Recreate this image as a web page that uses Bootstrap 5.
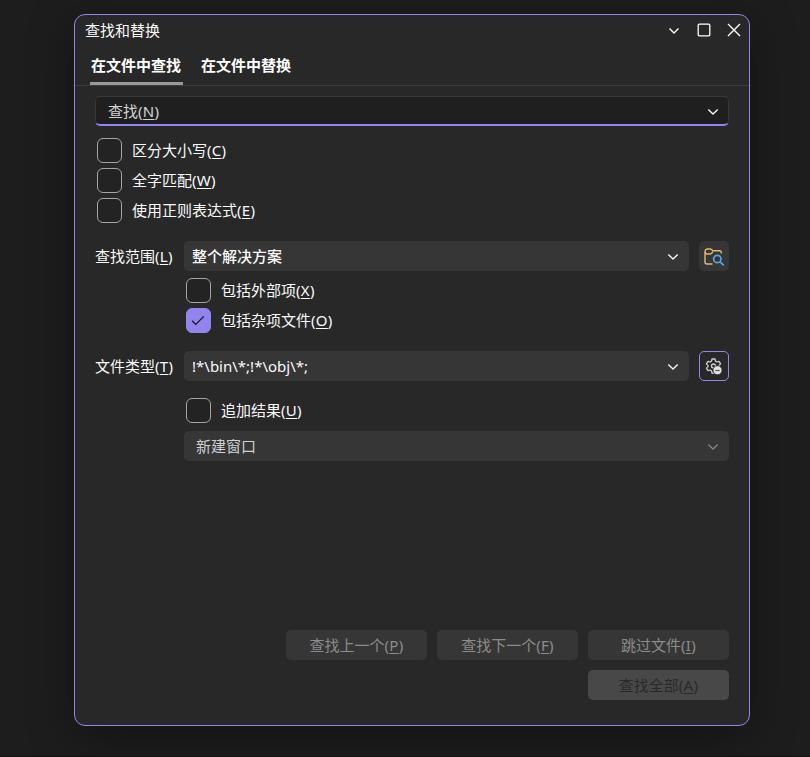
<!DOCTYPE html>
<html lang="zh-CN" data-bs-theme="dark">
<head>
<meta charset="utf-8">
<meta name="viewport" content="width=device-width, initial-scale=1">
<title>查找和替换</title>
<link href="https://cdn.jsdelivr.net/npm/bootstrap@5.3.0/dist/css/bootstrap.min.css" rel="stylesheet">
<style>
body{background:#1d1d1d;color:#fafafa;font:15px/20px "Noto Sans","Noto Sans CJK SC",sans-serif;height:757px;padding:14px 60px 0 74px;overflow:hidden;border-bottom:1px solid #150d0f}
.dialog-win{width:676px;height:712px;background:#282828;border:1px solid #9184ee;border-radius:11px;box-shadow:0 10px 46px rgba(0,0,0,.36)}
.title-bar{height:30px;padding-left:10px}
.win-btn{width:30px;height:30px;padding:0;border:0;background:none;color:#fff;display:flex;align-items:center;justify-content:center}
.tab-strip{height:41px;border-bottom:1px solid #3d3d3d;padding-left:15px;gap:17px}
.tab-item{height:40px;padding:10px 1px 0;font-weight:700;border-bottom:3px solid transparent;white-space:nowrap;color:#fff}
.tab-item.current{border-bottom-color:#999;width:93px}
.pane{padding:10px 20px 0;height:639px}
.find-box{height:30px;background:#1f1f1f;border:1px solid #383838;border-bottom:2px solid #9184ee;border-radius:5px;color:#d2d2d2;padding:1px 8px 0 12px}
.box{height:30px;background:#363636;border-radius:5px;padding:0 9px 0 8px}
.box svg,.find-box svg{flex:none}
.opt-row{height:30px;gap:10px;padding-left:2px}
.opt-row .form-check-input{width:25px;height:25px;margin:0;border:1px solid #a5a5a5;border-radius:6px;background-color:#232323;flex:none}
.opt-row .form-check-input:checked{background-color:#9184ee;border-color:#9184ee;background-size:25px 25px;background-image:url("data:image/svg+xml,%3csvg xmlns='http://www.w3.org/2000/svg' viewBox='0 0 25 25'%3e%3cpath fill='none' stroke='%23191919' stroke-width='1.3' d='M6 12.800l3.800 3.600 8-8'/%3e%3c/svg%3e")}
.hotkey{letter-spacing:.3px}
.field-label{width:89px;flex:none;white-space:nowrap}
.indent{margin-left:89px}
.match-group{margin-top:9px}
.scope-row{margin-top:16px}
.scope-opts{margin-top:4px}
.type-row{margin-top:16px}
.result-group{margin-top:14px}
.result-box{margin-top:6px;padding-left:12px;color:#cfcfcf}
.tool-btn{width:30px;height:30px;margin-left:10px;padding:0;background:#363636;border:0;border-radius:5px;display:flex;align-items:center;justify-content:center;flex:none}
.tool-btn.focused{background:#282828;border:1px solid #9184ee}
.act-stack{gap:10px;padding-bottom:25px}
.act-line{gap:10px}
.act-btn{width:141px;height:30px;padding:0;border:0;border-radius:5px;background:#363636;color:#8c8c8c;font-size:15px;line-height:30px}
.act-btn.primary-act{background:#484848;color:#292929}
u{text-underline-offset:2px;text-decoration-thickness:1px}
</style>
<script src="https://cdn.jsdelivr.net/npm/bootstrap@5.3.0/dist/js/bootstrap.bundle.min.js"></script>
</head>
<body>
<main class="dialog-win d-flex flex-column">
  <header class="title-bar d-flex align-items-center justify-content-between">
    <span>查找和替换</span>
    <div class="d-flex">
      <button class="win-btn" aria-label="menu"><svg width="12" height="12" viewBox="0 0 12 12" fill="none" stroke="currentColor" stroke-width="1.4"><path d="M1.5 4.5 6 9l4.5-4.5"/></svg></button>
      <button class="win-btn" aria-label="maximize"><svg width="14" height="14" viewBox="0 0 14 14" fill="none" stroke="currentColor" stroke-width="1.3"><rect x="1.2" y="1.2" width="11.6" height="11.6" rx="1"/></svg></button>
      <button class="win-btn" aria-label="close"><svg width="14" height="14" viewBox="0 0 14 14" fill="none" stroke="currentColor" stroke-width="1.4"><path d="m1 1 12 12M13 1 1 13"/></svg></button>
    </div>
  </header>
  <nav class="tab-strip d-flex">
    <div class="tab-item current">在文件中查找</div>
    <div class="tab-item">在文件中替换</div>
  </nav>
  <section class="pane d-flex flex-column">
    <div class="find-box d-flex align-items-center justify-content-between">
      <span>查找<span class="hotkey">(<u>N</u>)</span></span>
      <svg width="14" height="12" viewBox="0 0 14 12" fill="none" stroke="#f5f5f5" stroke-width="1.4"><path d="m2.300 4.500 4.700 4.500L11.700 4.500"/></svg>
    </div>
    <div class="match-group">
      <label class="opt-row d-flex align-items-center"><input class="form-check-input" type="checkbox"><span>区分大小写<span class="hotkey">(<u>C</u>)</span></span></label>
      <label class="opt-row d-flex align-items-center"><input class="form-check-input" type="checkbox"><span>全字匹配<span class="hotkey">(<u>W</u>)</span></span></label>
      <label class="opt-row d-flex align-items-center"><input class="form-check-input" type="checkbox"><span>使用正则表达式<span class="hotkey">(<u>E</u>)</span></span></label>
    </div>
    <div class="scope-row d-flex align-items-center">
      <span class="field-label">查找范围<span class="hotkey">(<u>L</u>)</span></span>
      <div class="box flex-grow-1 d-flex align-items-center justify-content-between"><span class="fw-medium">整个解决方案</span>
        <svg width="14" height="12" viewBox="0 0 14 12" fill="none" stroke="#f5f5f5" stroke-width="1.4"><path d="m2.300 4.500 4.700 4.500L11.700 4.500"/></svg></div>
      <button class="tool-btn" aria-label="browse">
        <svg width="22" height="20" viewBox="0 0 22 20" fill="none" stroke="#dfb978" stroke-width="1.4"><path d="M9.500 18H4a2 2 0 0 1-2-2V5.500a2.500 2.500 0 0 1 2.500-2.500h2.700c1.300 0 1.800.7 2.500 1.700H16.500a1.800 1.800 0 0 1 1.800 1.800v1M2 5.500a2.500 2.500 0 0 0 2.500 2.500h2.700c1.200 0 2-.8 2.500-2.200"/><g stroke="#56a5e6" stroke-width="1.700"><circle cx="14.300" cy="13" r="3.700"/><path d="m17 15.700 3.700 3.700"/></g></svg>
      </button>
    </div>
    <div class="indent scope-opts">
      <label class="opt-row d-flex align-items-center"><input class="form-check-input" type="checkbox"><span>包括外部项<span class="hotkey">(<u>X</u>)</span></span></label>
      <label class="opt-row d-flex align-items-center"><input class="form-check-input" type="checkbox" checked><span>包括杂项文件<span class="hotkey">(<u>O</u>)</span></span></label>
    </div>
    <div class="type-row d-flex align-items-center">
      <span class="field-label">文件类型<span class="hotkey">(<u>T</u>)</span></span>
      <div class="box flex-grow-1 d-flex align-items-center justify-content-between"><span>!*\bin\*;!*\obj\*;</span>
        <svg width="14" height="12" viewBox="0 0 14 12" fill="none" stroke="#f5f5f5" stroke-width="1.4"><path d="m2.300 4.500 4.700 4.500L11.700 4.500"/></svg></div>
      <button class="tool-btn focused" aria-label="settings">
        <svg width="18" height="18" viewBox="0 0 18 18" fill="none" stroke="#cfcfcf" stroke-width="1.300"><path stroke-linejoin="round" d="M7 2h3l.5 2.100 1.500.9 2-.7 1.600 2.600L14 8.400v1.200l1.600 1.500-1.600 2.600-2-.7-1.500.9L10 16H7l-.5-2.100L5 13l-2 .7-1.600-2.600L3 9.600V8.400L1.400 6.900 3 4.300l2 .7 1.500-.9z"/><circle cx="8.500" cy="9" r="2"/><circle cx="12.500" cy="13.200" r="4.500" fill="#e4e4e4" stroke="#282828" stroke-width=".8"/><path stroke="#555" stroke-width="1.200" d="M10.300 13.500h4.400"/></svg>
      </button>
    </div>
    <div class="indent result-group">
      <label class="opt-row d-flex align-items-center"><input class="form-check-input" type="checkbox"><span>追加结果<span class="hotkey">(<u>U</u>)</span></span></label>
      <div class="box result-box d-flex align-items-center justify-content-between"><span>新建窗口</span>
        <svg width="14" height="12" viewBox="0 0 14 12" fill="none" stroke="#858585" stroke-width="1.300"><path d="m2.300 4.500 4.700 4.500L11.700 4.500"/></svg></div>
    </div>
    <footer class="act-stack mt-auto d-flex flex-column align-items-end">
      <div class="act-line d-flex">
        <button class="act-btn">查找上一个<span class="hotkey">(<u>P</u>)</span></button>
        <button class="act-btn">查找下一个<span class="hotkey">(<u>F</u>)</span></button>
        <button class="act-btn">跳过文件<span class="hotkey">(<u>I</u>)</span></button>
      </div>
      <button class="act-btn primary-act">查找全部<span class="hotkey">(<u>A</u>)</span></button>
    </footer>
  </section>
</main>
</body>
</html>
